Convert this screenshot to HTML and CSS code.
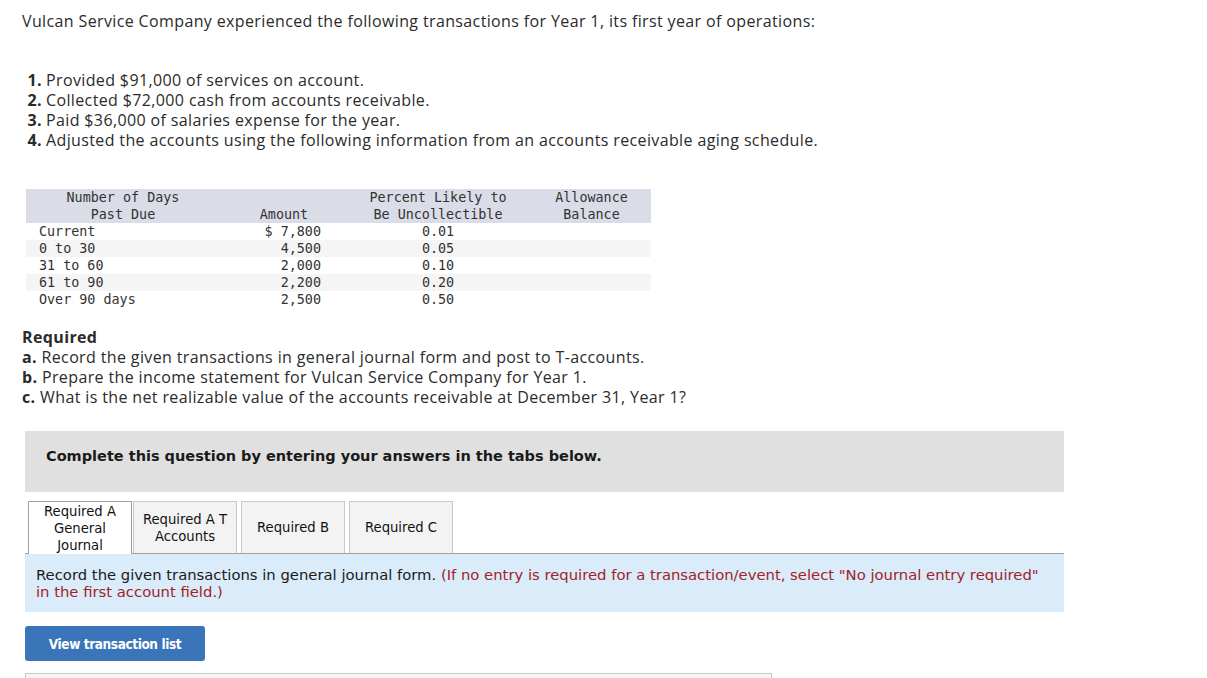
FILE: index.html
```html
<!DOCTYPE html>
<html>
<head>
<meta charset="utf-8">
<link rel="stylesheet" href="styles.css">
</head>
<body>
<div class="page">
  <p class="intro">Vulcan Service Company experienced the following transactions for Year 1, its first year of operations:</p>
  <ol class="steps">
    <li><span class="num">1.</span><span>Provided $91,000 of services on account.</span></li>
    <li><span class="num">2.</span><span>Collected $72,000 cash from accounts receivable.</span></li>
    <li><span class="num">3.</span><span>Paid $36,000 of salaries expense for the year.</span></li>
    <li><span class="num">4.</span><span>Adjusted the accounts using the following information from an accounts receivable aging schedule.</span></li>
  </ol>
  <table class="aging">
    <thead>
      <tr>
        <th class="c1">Number of Days<br>Past Due</th>
        <th class="c2"><br>Amount</th>
        <th class="c3">Percent Likely to<br>Be Uncollectible</th>
        <th class="c4">Allowance<br>Balance</th>
      </tr>
    </thead>
    <tbody>
      <tr><td class="c1">Current</td><td class="c2">$ 7,800</td><td class="c3">0.01</td><td class="c4"></td></tr>
      <tr><td class="c1">0 to 30</td><td class="c2">4,500</td><td class="c3">0.05</td><td class="c4"></td></tr>
      <tr><td class="c1">31 to 60</td><td class="c2">2,000</td><td class="c3">0.10</td><td class="c4"></td></tr>
      <tr><td class="c1">61 to 90</td><td class="c2">2,200</td><td class="c3">0.20</td><td class="c4"></td></tr>
      <tr><td class="c1">Over 90 days</td><td class="c2">2,500</td><td class="c3">0.50</td><td class="c4"></td></tr>
    </tbody>
  </table>
  <div class="required">
    <div class="req-title">Required</div>
    <div><b>a.</b> Record the given transactions in general journal form and post to T-accounts.</div>
    <div><b>b.</b> Prepare the income statement for Vulcan Service Company for Year 1.</div>
    <div><b>c.</b> What is the net realizable value of the accounts receivable at December 31, Year 1?</div>
  </div>
  <div class="banner">Complete this question by entering your answers in the tabs below.</div>
  <div class="tabs">
    <div class="tab active">Required A<br>General<br>Journal</div>
    <div class="tab">Required A T<br>Accounts</div>
    <div class="tab">Required B</div>
    <div class="tab">Required C</div>
  </div>
  <div class="info">Record the given transactions in general journal form. <span class="red">(If no entry is required for a transaction/event, select "No journal entry required" in the first account field.)</span></div>
  <button class="btn">View transaction list</button>
  <div class="bottom-box"></div>
</div>
</body>
</html>
```
FILE: styles.css
```css
* { box-sizing: border-box; }
html, body { margin: 0; padding: 0; background: #fff; }
body { font-family: "Open Sans", "Liberation Sans", sans-serif; color: #2b2b2b; overflow: hidden; }
.page { padding: 11px 0 0 22px; width: 1207px; height: 678px; }
.intro { margin: 0; font-size: 16px; letter-spacing: 0.37px; line-height: 20px; }
.steps { list-style: none; margin: 39px 0 0 0; padding: 0; font-size: 16px; letter-spacing: 0.37px; line-height: 20px; }
.steps li { display: flex; }
.steps .num { width: 20px; text-align: right; font-weight: bold; margin-right: 4px; }
.aging { margin: 39px 0 0 4px; border-collapse: collapse; font-family: "DejaVu Sans Mono", "Liberation Mono", monospace; font-size: 13.4px; color: #333; }
.aging th, .aging td { padding: 0; line-height: 17px; height: 17px; font-weight: normal; }
.aging thead tr { background: #dadde7; }
.aging th { vertical-align: bottom; text-align: center; }
.aging .c1 { width: 194px; }
.aging .c2 { width: 128px; }
.aging .c3 { width: 180px; }
.aging .c4 { width: 123px; }
.aging td.c1 { text-align: left; padding-left: 13px; }
.aging td.c2 { text-align: right; padding-right: 27px; }
.aging td.c3 { text-align: center; }
.aging th.c4 { padding-left: 4px; }
.aging tbody tr:nth-child(even) { background: #f5f5f5; }
.required { margin-top: 19px; font-size: 16px; letter-spacing: 0.37px; line-height: 20px; }
.req-title { font-weight: bold; }
.banner { margin: 24px 0 0 3px; width: 1039px; height: 61px; background: #e0e0e0; padding: 15px 0 0 21px; font-family: "DejaVu Sans", sans-serif; font-weight: bold; font-size: 14.5px; line-height: 20px; color: #1a1a1a; }
.tabs { display: flex; margin: 9px 0 0 3px; width: 1039px; border-bottom: 1px solid #a0a0a0; padding-left: 3px; align-items: flex-end; }
.tab { width: 104px; height: 52px; background: #f3f3f3; border: 1px solid #c8c8c8; border-bottom: none; margin-left: 4px; display: flex; align-items: center; justify-content: center; text-align: center; font-family: "DejaVu Sans", sans-serif; font-size: 13.2px; line-height: 17px; color: #111; }
.tab.active { margin-left: 0; background: #fff; border-color: #a0a0a0; height: 53px; margin-bottom: -1px; }
.tab.active + .tab { margin-left: 1px; }
.info { margin-left: 3px; width: 1039px; height: 58px; background: #daebf9; padding: 12px 14px 0 11px; font-family: "DejaVu Sans", sans-serif; font-size: 14.8px; line-height: 17px; color: #1a1a1a; }
.red { color: #a3222a; }
.btn { display: block; margin: 14px 0 0 3px; width: 180px; height: 35px; border: none; border-radius: 3px; background: #3a75b9; color: #fff; font-family: "DejaVu Sans Condensed", sans-serif; font-weight: bold; font-size: 13.5px; letter-spacing: -0.4px; padding: 0; }
.bottom-box { margin: 12px 0 0 3px; width: 747px; height: 20px; background: #f5f5f5; border: 1px solid #c8c8c8; }
```
